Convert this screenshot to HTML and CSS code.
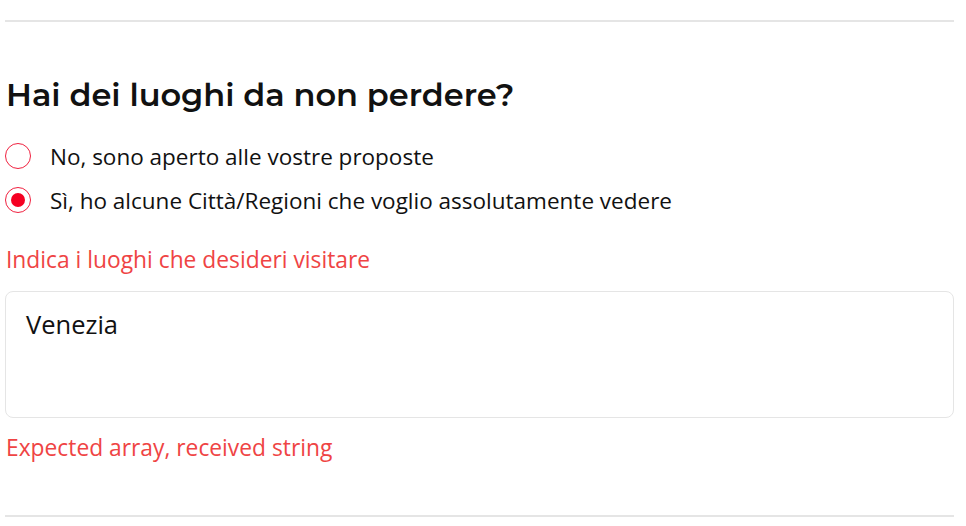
FILE: index.html
```html
<!DOCTYPE html>
<html lang="it">
<head>
<meta charset="utf-8">
<link rel="stylesheet" href="styles.css">
</head>
<body>
<section class="block">
  <h2 class="title">Hai dei luoghi da non perdere?</h2>
  <div class="options">
    <label class="option">
      <span class="radio"></span>
      <span class="opt-text">No, sono aperto alle vostre proposte</span>
    </label>
    <label class="option">
      <span class="radio checked"></span>
      <span class="opt-text">Sì, ho alcune Città/Regioni che voglio assolutamente vedere</span>
    </label>
  </div>
  <div class="field-label">Indica i luoghi che desideri visitare</div>
  <div class="textarea">Venezia</div>
  <div class="error">Expected array, received string</div>
</section>
</body>
</html>
```
FILE: styles.css
```css
* { box-sizing: border-box; }
html, body { margin: 0; padding: 0; background: #fff; }
body {
  font-family: "Open Sans", "Noto Sans", sans-serif;
  color: #111;
  width: 966px;
  height: 526px;
  overflow: hidden;
}
.block {
  margin: 20px 12px 0 5px;
  border-top: 2px solid #e5e5e5;
  border-bottom: 2px solid #e5e5e5;
  padding: 53px 0 51px 0;
}
.title {
  margin: 0 0 0 1px;
  font-family: "Montserrat", "Noto Sans", sans-serif;
  font-weight: 600;
  font-size: 32px;
  line-height: 40px;
  color: #111;
}
.options {
  margin-top: 27px;
  display: flex;
  flex-direction: column;
  gap: 16px;
}
.option {
  display: flex;
  align-items: center;
  gap: 19px;
  height: 28px;
}
.radio {
  width: 26px;
  height: 26px;
  border-radius: 50%;
  border: 1.5px solid #f0213f;
  display: flex;
  align-items: center;
  justify-content: center;
  flex: none;
}
.radio.checked::after {
  content: "";
  width: 14px;
  height: 14px;
  border-radius: 50%;
  background: #f50022;
}
.opt-text {
  font-size: 22.5px;
  color: #111;
}
.field-label {
  margin: 30px 0 0 1px;
  font-size: 22.8px;
  line-height: 32px;
  color: #ef4444;
}
.textarea {
  margin-top: 15px;
  height: 127px;
  border: 1px solid #e5e5e5;
  border-radius: 8px;
  padding: 15px 20px;
  font-size: 25.5px;
  line-height: 34px;
  color: #111;
}
.error {
  margin: 14px 0 0 1px;
  font-size: 22.8px;
  line-height: 32px;
  color: #ef4444;
}
```
